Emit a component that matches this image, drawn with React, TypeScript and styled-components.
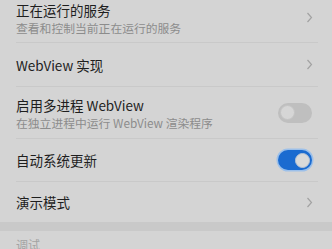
import React from "react";
import styled, { createGlobalStyle } from "styled-components";

const Global = createGlobalStyle`
  html, body { margin: 0; padding: 0; background: #d4d4d4; overflow: hidden; }
  body { font-family: "Noto Sans CJK SC", "Noto Sans", sans-serif; }
`;

const Page = styled.div`
  width: 332px;
  height: 249px;
  overflow: hidden;
  background: #d4d4d4;
`;

const List = styled.div`
  display: flex;
  flex-direction: column;
  margin-top: -8px;
`;

const Row = styled.div<{ $h: number; $last?: boolean }>`
  display: flex;
  align-items: center;
  justify-content: space-between;
  margin: 0 14px 0 16px;
  padding-right: 5px;
  height: ${(p) => p.$h}px;
  border-bottom: ${(p) => (p.$last ? "none" : "1px solid #c9c9c9")};
  box-sizing: content-box;
`;

const Texts = styled.div`
  display: flex;
  flex-direction: column;
  gap: 2px;
  margin-top: 2px;
`;

const Title = styled.div`
  font-size: 13.5px;
  line-height: 16px;
  color: #1e1e1e;
`;

const Sub = styled.div`
  font-size: 11.8px;
  line-height: 15px;
  color: #8c8c8c;
`;

const Band = styled.div`
  height: 9px;
  background: #c9c9c9;
`;

const SectionHead = styled.div`
  padding: 6px 16px 0;
  font-size: 12px;
  line-height: 16px;
  color: #a3a3a3;
`;

const Track = styled.div<{ $on?: boolean }>`
  width: 34px;
  height: 20px;
  border-radius: 10px;
  box-sizing: border-box;
  display: flex;
  align-items: center;
  justify-content: ${(p) => (p.$on ? "flex-end" : "flex-start")};
  padding: 0 2px;
  background: ${(p) => (p.$on ? "#1b6bd0" : "#bfbfbf")};
  box-shadow: ${(p) => (p.$on ? "0 0 0 1.5px #9cc0ea" : "none")};
  margin-right: 1px;
`;

const Knob = styled.div<{ $on?: boolean }>`
  width: 15px;
  height: 15px;
  border-radius: 50%;
  box-sizing: border-box;
  background: ${(p) => (p.$on ? "#d9d9d9" : "#d6d6d6")};
  border: 1.5px solid ${(p) => (p.$on ? "#b8c4d4" : "#c4c4c4")};
`;

const Chevron = () => (
  <svg width="7" height="11" viewBox="0 0 7 11" fill="none">
    <path d="M1.5 1 L5.5 5.5 L1.5 10" stroke="#a2a2a2" strokeWidth="1.2" />
  </svg>
);

const Toggle = ({ on }: { on?: boolean }) => (
  <Track $on={on}>
    <Knob $on={on} />
  </Track>
);

export default function App() {
  return (
    <Page>
      <Global />
      <List>
        <Row $h={50}>
          <Texts>
            <Title>正在运行的服务</Title>
            <Sub>查看和控制当前正在运行的服务</Sub>
          </Texts>
          <Chevron />
        </Row>
        <Row $h={43}>
          <Title>WebView 实现</Title>
          <Chevron />
        </Row>
        <Row $h={51}>
          <Texts>
            <Title>启用多进程 WebView</Title>
            <Sub>在独立进程中运行 WebView 渲染程序</Sub>
          </Texts>
          <Toggle />
        </Row>
        <Row $h={42}>
          <Title>自动系统更新</Title>
          <Toggle on />
        </Row>
        <Row $h={40} $last>
          <Title>演示模式</Title>
          <Chevron />
        </Row>
        <Band />
        <SectionHead>调试</SectionHead>
      </List>
    </Page>
  );
}
